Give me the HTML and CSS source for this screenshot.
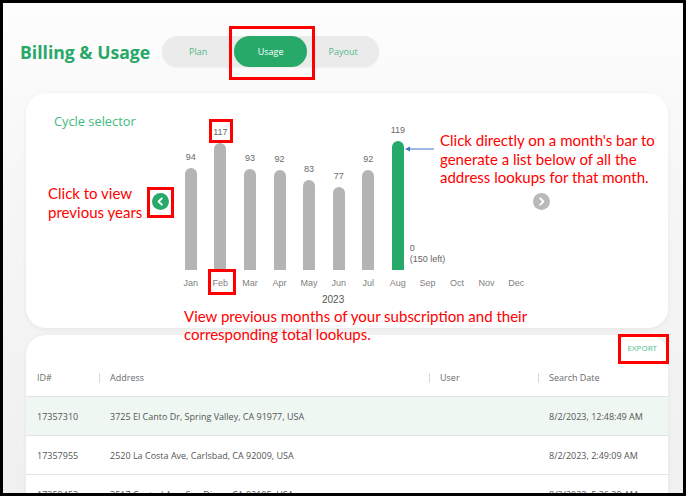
FILE: index.html
```html
<!DOCTYPE html>
<html lang="en">
<head>
<meta charset="utf-8">
<title>Billing &amp; Usage</title>
<link rel="stylesheet" href="styles.css">
</head>
<body>
<div class="frame">
  <header class="top">
    <h1 class="title">Billing &amp; Usage</h1>
    <nav class="tabs">
      <span class="tab">Plan</span>
      <span class="tab active">Usage</span>
      <span class="tab">Payout</span>
    </nav>
  </header>

  <section class="card chart-card">
    <div class="cycle">Cycle selector</div>
    <button class="nav-btn prev" aria-label="Previous year">
      <svg viewBox="0 0 16 16" width="17" height="17"><polyline points="9.2,5 6.2,8 9.2,11" fill="none" stroke="#fff" stroke-width="1.8" stroke-linecap="round" stroke-linejoin="round"/></svg>
    </button>
    <div class="chart">
      <div class="cols">
        <div class="col"><span class="val">94</span><span class="bar" style="height:102px"></span></div>
        <div class="col"><span class="val">117</span><span class="bar" style="height:127px"></span></div>
        <div class="col"><span class="val">93</span><span class="bar" style="height:101px"></span></div>
        <div class="col"><span class="val">92</span><span class="bar" style="height:100px"></span></div>
        <div class="col"><span class="val">83</span><span class="bar" style="height:90px"></span></div>
        <div class="col"><span class="val">77</span><span class="bar" style="height:83px"></span></div>
        <div class="col"><span class="val">92</span><span class="bar" style="height:100px"></span></div>
        <div class="col current"><span class="val">119</span><span class="bar" style="height:129px"></span><span class="extra">0<br>(150 left)</span></div>
        <div class="col"></div>
        <div class="col"></div>
        <div class="col"></div>
        <div class="col"></div>
      </div>
      <div class="months">
        <span>Jan</span><span>Feb</span><span>Mar</span><span>Apr</span><span>May</span><span>Jun</span>
        <span>Jul</span><span>Aug</span><span>Sep</span><span>Oct</span><span>Nov</span><span>Dec</span>
      </div>
      <div class="year">2023</div>
    </div>
    <button class="nav-btn next" aria-label="Next year">
      <svg viewBox="0 0 16 16" width="17" height="17"><polyline points="6.8,5 9.8,8 6.8,11" fill="none" stroke="#fff" stroke-width="1.8" stroke-linecap="round" stroke-linejoin="round"/></svg>
    </button>
  </section>

  <section class="card table-card">
    <div class="table-top"><span class="export">EXPORT</span></div>
    <div class="row head">
      <span class="cell">ID#</span>
      <span class="cell sep">Address</span>
      <span class="cell sep">User</span>
      <span class="cell sep">Search Date</span>
    </div>
    <div class="row selected">
      <span class="cell">17357310</span>
      <span class="cell">3725 El Canto Dr, Spring Valley, CA 91977, USA</span>
      <span class="cell"></span>
      <span class="cell">8/2/2023, 12:48:49 AM</span>
    </div>
    <div class="row">
      <span class="cell">17357955</span>
      <span class="cell">2520 La Costa Ave, Carlsbad, CA 92009, USA</span>
      <span class="cell"></span>
      <span class="cell">8/2/2023, 2:49:09 AM</span>
    </div>
    <div class="row">
      <span class="cell">17359453</span>
      <span class="cell">3517 Central Ave, San Diego, CA 92105, USA</span>
      <span class="cell"></span>
      <span class="cell">8/2/2023, 5:36:29 AM</span>
    </div>
  </section>

  <!-- annotation overlays -->
  <div class="hl hl-usage"></div>
  <div class="hl hl-117"></div>
  <div class="hl hl-prev"></div>
  <div class="hl hl-feb"></div>
  <div class="hl hl-export"></div>
  <p class="note note-left">Click to view<br>previous years</p>
  <p class="note note-right">Click directly on a month's bar to<br>generate a list below of all the<br>address lookups for that month.</p>
  <p class="note note-bottom">View previous months of your subscription and their<br>corresponding total lookups.</p>
  <svg class="pointer" width="30" height="8" viewBox="0 0 30 8"><line x1="4" y1="4" x2="29" y2="4" stroke="#4472c4" stroke-width="1"/><polygon points="0,4 5,1.5 5,6.5" fill="#4472c4"/></svg>
</div>
</body>
</html>
```

FILE: styles.css
```css
* { box-sizing: border-box; }

html, body {
  margin: 0;
  padding: 0;
  background: #ffffff;
}

.frame {
  position: relative;
  width: 686px;
  height: 496px;
  border: 3px solid #000;
  overflow: hidden;
  background: linear-gradient(180deg, #fdfdfd 0%, #f6f6f6 40%, #f0f0f0 100%);
  font-family: "Open Sans", sans-serif;
}

/* header */
.top {
  display: flex;
  align-items: center;
  height: 90px;
  padding: 7px 0 0 17px;
}

.title {
  margin: 0;
  font-size: 17.6px;
  font-weight: 700;
  color: #28a868;
  line-height: 24px;
}

.tabs {
  display: flex;
  margin-left: 12px;
  height: 31px;
  background: #ebebeb;
  border-radius: 16px;
  box-shadow: 0 1px 2px rgba(0, 0, 0, 0.05);
}

.tab {
  width: 72px;
  display: flex;
  align-items: center;
  justify-content: center;
  font-size: 9px;
  color: #4fb985;
  border-radius: 16px;
}

.tab.active {
  width: 73px;
  background: #27a96a;
  color: #ffffff;
}

/* cards */
.card {
  background: #ffffff;
  margin-left: 23px;
  width: 642px;
  box-shadow: 0 1px 5px rgba(0, 0, 0, 0.06);
}

.chart-card {
  height: 235px;
  border-radius: 20px;
  display: flex;
  align-items: flex-start;
}

.cycle {
  width: 126px;
  padding: 19px 0 0 28px;
  font-size: 12.8px;
  line-height: 18px;
  color: #3fb97c;
}

.nav-btn {
  margin-top: 100px;
  width: 17px;
  height: 17px;
  padding: 0;
  border: none;
  border-radius: 50%;
  display: flex;
  align-items: center;
  justify-content: center;
}

.nav-btn.prev { background: #27a96a; }
.nav-btn.next { background: #b9b9b9; margin-left: 2px; }

.chart {
  margin-left: 7px;
  width: 355px;
  padding-top: 30px;
  font-family: "Liberation Sans", Arial, sans-serif;
}

.cols {
  display: flex;
  height: 147px;
  align-items: stretch;
}

.col {
  flex: 1;
  display: flex;
  flex-direction: column;
  justify-content: flex-end;
  align-items: center;
  position: relative;
}

.val {
  font-size: 9px;
  line-height: 11px;
  margin-bottom: 5px;
  color: #6a6a6a;
}

.bar {
  width: 12px;
  background: #b4b4b4;
  border-radius: 6px 6px 0 0;
}

.col.current .bar { background: #27a96a; }

.extra {
  position: absolute;
  left: calc(50% + 12px);
  bottom: 5px;
  font-size: 9px;
  line-height: 11px;
  color: #666;
  white-space: nowrap;
}

.months {
  display: flex;
  margin-top: 7px;
}

.months span {
  flex: 1;
  text-align: center;
  font-size: 9px;
  line-height: 12px;
  color: #808080;
}

.year {
  margin-top: 5px;
  padding-left: 146px;
  font-size: 10px;
  line-height: 12px;
  color: #555;
}

/* table */
.table-card {
  margin-top: 7px;
  height: 200px;
  border-radius: 20px 20px 0 0;
}

.table-top {
  height: 24px;
  display: flex;
  justify-content: flex-end;
  align-items: center;
  padding-right: 11px;
}

.export {
  font-size: 8px;
  color: #4cc28a;
}

.row {
  display: grid;
  grid-template-columns: 73px 330px 109px 1fr;
  height: 39px;
  align-items: center;
  border-bottom: 1px solid #e4e4e4;
  font-size: 9px;
  color: #555;
}

.row.head { color: #6b6b6b; height: 38px; }
.row.selected { background: #eef7f2; }

.cell {
  padding-left: 11px;
  white-space: nowrap;
}

.row.head .cell.sep {
  display: flex;
  align-items: center;
  padding-left: 0;
}

.row.head .cell.sep::before {
  content: "";
  display: inline-block;
  width: 1px;
  height: 10px;
  background: #d9d9d9;
  margin-right: 10px;
}

/* annotations */
.hl {
  position: absolute;
  border: 3px solid #ff0000;
}

.hl-usage { left: 226px; top: 23px; width: 86px; height: 54px; }
.hl-117 { left: 206px; top: 116px; width: 24px; height: 24px; }
.hl-prev { left: 144px; top: 184px; width: 27px; height: 31px; }
.hl-feb { left: 205px; top: 266px; width: 28px; height: 26px; }
.hl-export { left: 615px; top: 331px; width: 51px; height: 30px; }

.note {
  position: absolute;
  margin: 0;
  font-family: Lato, "Open Sans", sans-serif;
  font-size: 15px;
  line-height: 19px;
  color: #ff0000;
  white-space: nowrap;
}

.note-left { left: 45px; top: 181px; }
.note-right { left: 437px; top: 128px; line-height: 18.5px; }
.note-bottom { left: 181px; top: 304px; line-height: 18px; }

.pointer {
  position: absolute;
  left: 402px;
  top: 142px;
}
```
